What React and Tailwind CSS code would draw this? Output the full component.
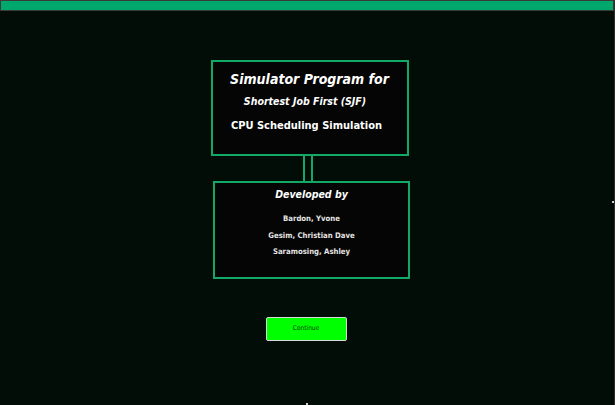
export default function App() {
  return (
    <div className="relative h-[405px] w-full overflow-hidden border-r border-[#2e2e2e] bg-[#020d08] font-['DejaVu_Sans_Condensed','DejaVu_Sans',sans-serif]">
      <div className="h-[11px] border border-[#3a3a3a] bg-[#00a86b]" />
      <div className="flex flex-col items-center pt-[49px]">
        <div className="ml-[5px] flex h-[96px] w-[198px] flex-col items-center border-2 border-[#12a866] bg-[#050505] pt-[7px] text-white">
          <div className="text-[14px] font-bold italic leading-[20px]">Simulator Program for</div>
          <div className="mt-[4px] pr-[9px] text-[10.5px] font-bold italic leading-[16px]">Shortest Job First (SJF)</div>
          <div className="mt-[8px] pr-[6px] text-[11px] font-bold leading-[18px]">CPU Scheduling Simulation</div>
        </div>
        <div className="ml-[2px] h-[25px] w-[10px] border-x-2 border-[#12a866]" />
        <div className="ml-[9px] flex h-[98px] w-[197px] flex-col items-center border-2 border-[#12a866] bg-[#050505] pt-[2px] text-white">
          <div className="text-[10.5px] font-bold italic leading-[18px]">Developed by</div>
          <div className="mt-[9px] flex flex-col items-center gap-[2.5px] text-[7.7px] font-bold leading-[14px] text-[#e6e6e6]">
            <div>Bardon, Yvone</div>
            <div>Gesim, Christian Dave</div>
            <div>Saramosing, Ashley</div>
          </div>
        </div>
        <button className="mt-[38px] mr-[2px] h-[24px] w-[81px] rounded-[2px] border border-[#d8d8d8] bg-[#00ff00] text-[6.5px] text-[#0b3b0b]">
          Continue
        </button>
      </div>
      <span className="absolute right-0 top-[201px] h-[2px] w-[2px] bg-[#d0d0d0]" />
      <span className="absolute bottom-0 left-[306px] h-[2px] w-[2px] bg-[#d0d0d0]" />
    </div>
  );
}
